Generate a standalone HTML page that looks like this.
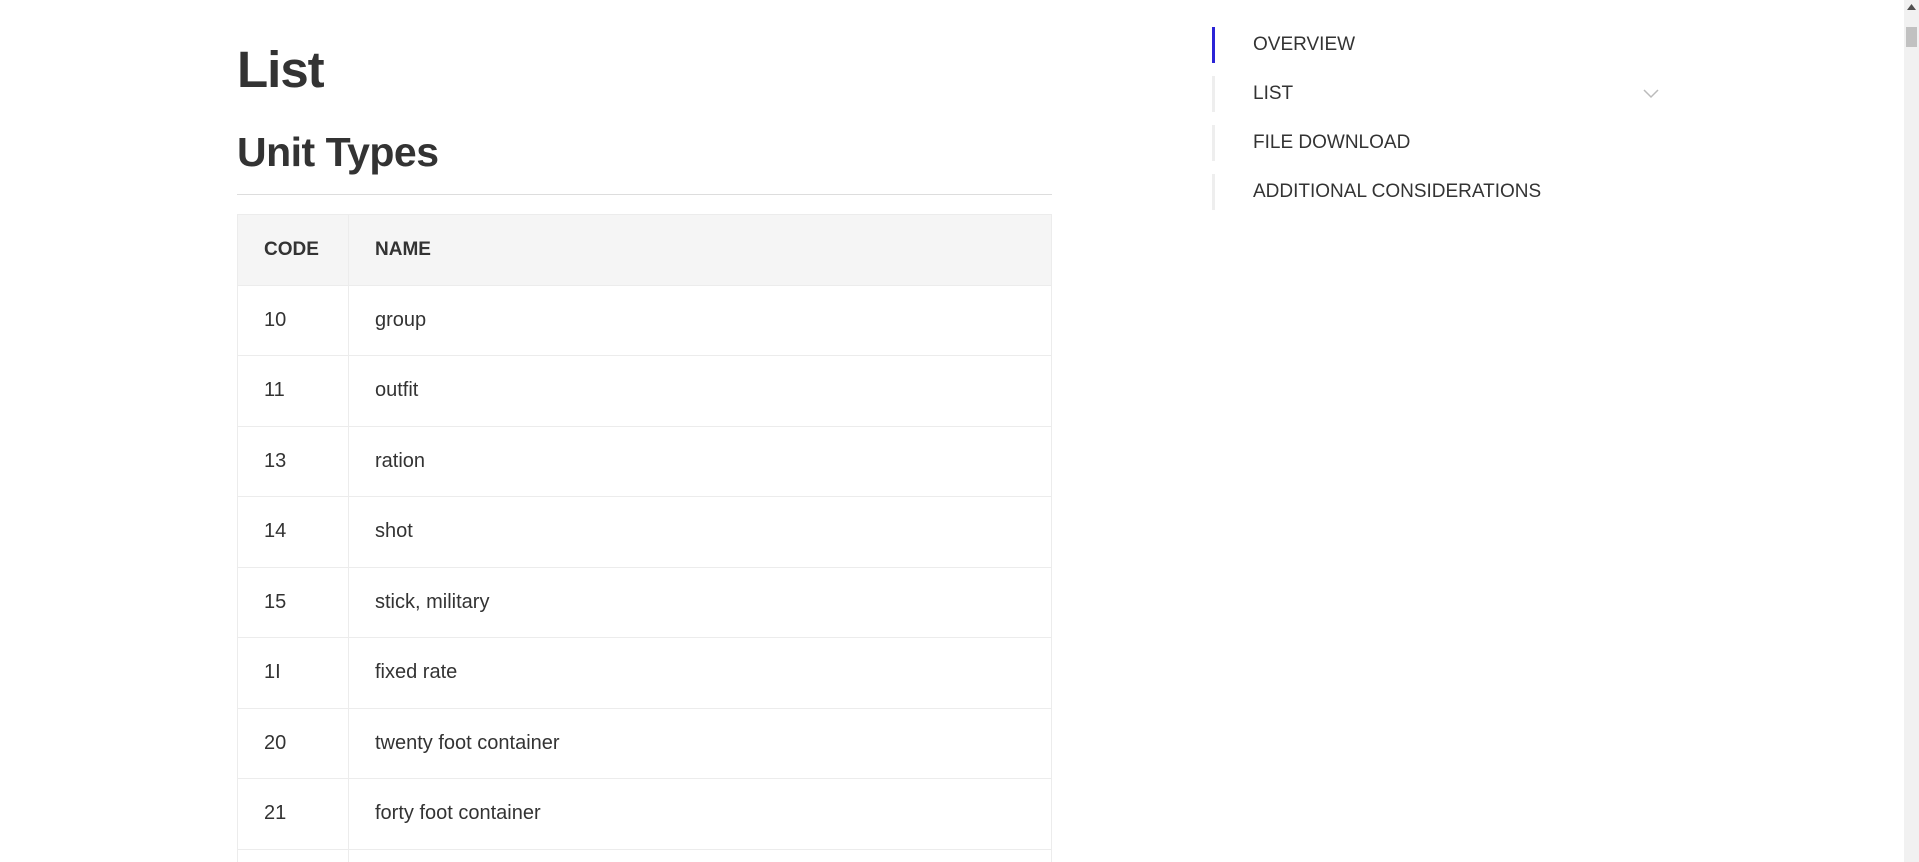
<!DOCTYPE html>
<html><head><style>
html,body{margin:0;padding:0;background:#fff;width:1919px;height:862px;overflow:hidden;font-family:"Liberation Sans",Arial,sans-serif;color:#333}
.wrap{position:relative;width:1919px;height:862px;overflow:hidden}
.main{position:absolute;left:237px;top:0;width:815px;height:862px;overflow:hidden}
h1{position:absolute;top:40px;left:0;margin:0;font-size:51px;font-weight:bold;letter-spacing:-1px;color:#333}
h2{position:absolute;top:129px;left:0;margin:0;font-size:41px;font-weight:bold;letter-spacing:-0.5px;color:#333}
.hr{position:absolute;top:194px;left:0;width:815px;height:1px;background:#ddd}
table{position:absolute;top:214px;left:0;width:815px;border-collapse:collapse;font-size:20px}
th,td{border:1px solid #ececec;text-align:left;padding:0 0 0 26px;height:69.5px}
th{background:#f5f5f5;font-weight:bold;font-size:19px}
td:first-child,th:first-child{width:84px}
.side{position:absolute;left:1212px;top:27px}
.it{position:relative;height:36px;margin-bottom:13px;border-left:3px solid #eee;padding-left:38px;line-height:36px;font-size:19px;color:#333;width:400px;box-sizing:border-box}
.it.a{border-left-color:#2b23d6}
.sb{position:absolute;right:0;top:0;width:15px;height:862px;background:#f1f1f1}
.th{position:absolute;right:2px;top:27px;width:11px;height:20px;background:#c1c1c1}
</style></head><body><div class="wrap">
<div class="main">
<h1>List</h1>
<h2>Unit Types</h2>
<div class="hr"></div>
<table>
<tr><th>CODE</th><th>NAME</th></tr>
<tr><td>10</td><td>group</td></tr>
<tr><td>11</td><td>outfit</td></tr>
<tr><td>13</td><td>ration</td></tr>
<tr><td>14</td><td>shot</td></tr>
<tr><td>15</td><td>stick, military</td></tr>
<tr><td>1I</td><td>fixed rate</td></tr>
<tr><td>20</td><td>twenty foot container</td></tr>
<tr><td>21</td><td>forty foot container</td></tr>
<tr><td>22</td><td>decilitre per gram</td></tr>
</table>
</div>
<div class="side">
<div class="it a">OVERVIEW</div>
<div class="it">LIST<svg style="position:absolute;left:428px;top:13px" width="16" height="10" viewBox="0 0 16 10"><path d="M1 1 L8 8 L15 1" fill="none" stroke="#bbb" stroke-width="1.5"/></svg></div>
<div class="it">FILE DOWNLOAD</div>
<div class="it">ADDITIONAL CONSIDERATIONS</div>
</div>
<div class="sb"><svg style="position:absolute;left:3px;top:4px" width="9" height="6"><path d="M0 6 L4.5 0 L9 6Z" fill="#505050"/></svg><div class="th"></div></div>
</div></body></html>
